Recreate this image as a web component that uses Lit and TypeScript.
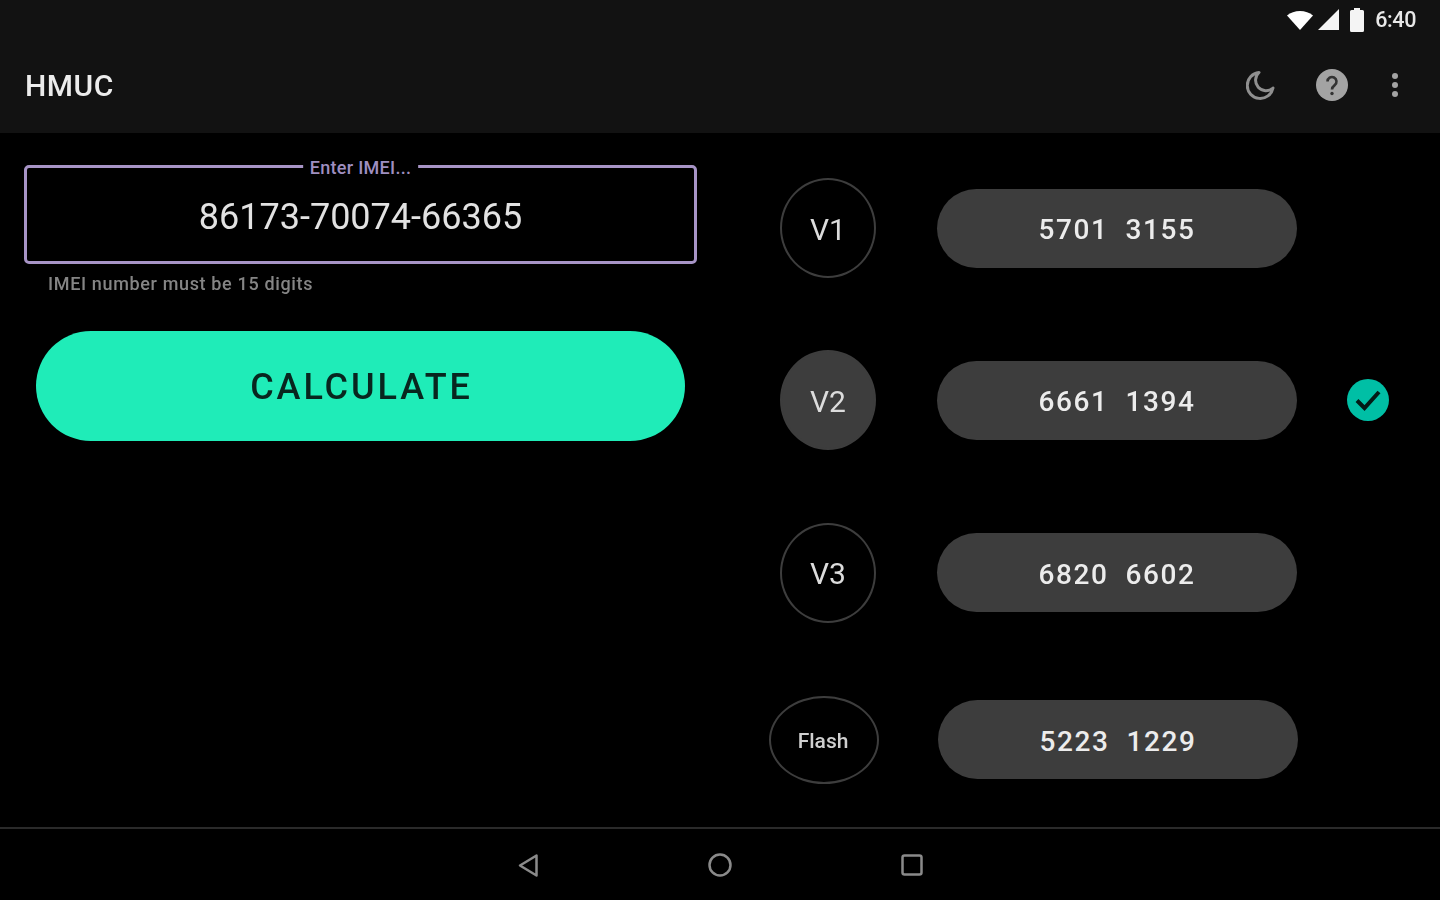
import { LitElement, html, css } from "lit";
import { customElement } from "lit/decorators.js";

const ROWS = [
  { label: "V1", code: "5701  3155" },
  { label: "V2", code: "6661  1394", active: true },
  { label: "V3", code: "6820  6602" },
  { label: "Flash", code: "5223  1229", flash: true },
];

@customElement("app-root")
export class AppRoot extends LitElement {
  static styles = css`
    :host { display: block; width: 1440px; height: 900px; background: #000; font-family: Roboto, "Liberation Sans", sans-serif; color: #e4e4e4; overflow: hidden; }
    .frame { display: flex; flex-direction: column; height: 900px; filter: blur(0.6px); }
    header { height: 133px; background: #121212; display: flex; flex-direction: column; flex: none; }
    .status { height: 40px; display: flex; align-items: center; justify-content: flex-end; padding-right: 24px; flex: none; }
    .status svg { display: block; }
    .wifi { margin-right: 5px; }
    .signal { margin-right: 10px; }
    .battery { margin-right: 11px; }
    .time { font-size: 21.5px; font-weight: 500; color: #e8e8e8; letter-spacing: -0.4px; line-height: 40px; }
    .toolbar { flex: 1; display: flex; align-items: center; padding: 0 41px 0 25px; }
    .title { font-size: 30px; font-weight: 500; color: #ececec; flex: 1; letter-spacing: 0.5px; position: relative; top: -1px; }
    .tools { display: flex; align-items: center; position: relative; top: -2px; }
    .tools svg { display: block; }
    .moon { margin-right: 40px; }
    .help { margin-right: 43px; }
    main { flex: 1; display: grid; grid-template-columns: 720px 720px; min-height: 0; }
    .left { padding: 32px 0 0 24px; display: flex; flex-direction: column; align-items: flex-start; }
    .field { position: relative; box-sizing: border-box; width: 673px; height: 99px; border: 3px solid #a794c6; border-radius: 5px; display: flex; align-items: center; justify-content: center; }
    .legend { position: absolute; top: -12px; left: 50%; transform: translateX(-50%); background: #000; padding: 0 7px; font-size: 18px; line-height: 24px; color: #9f8fc0; white-space: nowrap; font-weight: 500; letter-spacing: 0.3px; }
    .value { font-size: 36px; color: #e2e2e2; position: relative; top: 2px; }
    .hint { margin: 9px 0 0 24px; font-size: 18px; line-height: 22px; color: #858585; font-weight: 500; letter-spacing: 0.65px; }
    .calc { margin: 36px 0 0 12px; width: 649px; height: 110px; border-radius: 55px; background: #1fecb8; color: #08261f; font: 500 36px Roboto, sans-serif; letter-spacing: 2.9px; display: flex; align-items: center; justify-content: center; padding: 2px 0 0 2px; box-sizing: border-box; }
    .right { padding: 45px 0 0 49px; display: flex; flex-direction: column; gap: 72.3px; }
    .row { display: grid; grid-template-columns: 168px 360px 50px 42px; align-items: center; }
    .row.last { margin-top: 1px; }
    .badge { box-sizing: border-box; width: 96px; height: 100px; margin-left: 11px; border-radius: 50%; border: 2px solid #3d3d3d; display: flex; align-items: center; justify-content: center; font-size: 30px; color: #dcdcdc; padding-top: 2px; }
    .badge.on { background: #3d3d3d; border-color: #3d3d3d; }
    .badge.flash { width: 110px; height: 88px; margin-left: 0; font-size: 21px; font-weight: 500; color: #cfcfcf; padding: 2px 2px 0 0; }
    .pill { box-sizing: border-box; height: 79px; padding-top: 3px; border-radius: 40px; background: #3d3d3d; display: flex; align-items: center; justify-content: center; font-size: 28px; font-weight: 500; letter-spacing: 1.6px; color: #ececec; white-space: pre; }
    .last .pill { transform: translateX(1px); padding-top: 4px; }
    .check { grid-column: 4; display: block; }
    footer { height: 73px; flex: none; border-top: 2px solid #2a2a2a; box-sizing: border-box; display: grid; grid-template-columns: 24px 24px 24px; justify-content: center; column-gap: 168px; align-items: center; }
    footer svg { display: block; }
  `;

  private renderRow(r: (typeof ROWS)[number]) {
    const cls = `badge${r.active ? " on" : ""}${r.flash ? " flash" : ""}`;
    return html`<div class="row ${r.flash ? "last" : ""}">
      <div class=${cls}>${r.label}</div>
      <div class="pill">${r.code}</div>
      ${r.active
        ? html`<svg class="check" width="42" height="42" viewBox="0 0 42 42">
            <circle cx="21" cy="21" r="21" fill="#00bfa5"></circle>
            <path d="M10 21.500l7.500 7.500 14.500-16" fill="none" stroke="#031a16" stroke-width="4"></path>
          </svg>`
        : ""}
    </div>`;
  }

  render() {
    return html`<div class="frame">
      <header>
        <div class="status">
          <svg class="wifi" width="26" height="20" viewBox="0 0 26 20"><path d="M0 5.500C3.500 2.500 8 1 13 1s9.500 1.500 13 4.500L13 20z" fill="#fff"></path></svg>
          <svg class="signal" width="22" height="22" viewBox="0 0 22 22"><path d="M0 21 21 0v21z" fill="#f4f4f4"></path></svg>
          <svg class="battery" width="14" height="24" viewBox="0 0 14 24"><path d="M4 0h6v2h2.500q1.500 0 1.500 1.500V22.500q0 1.500-1.500 1.500h-11Q0 24 0 22.500V3.500Q0 2 1.500 2H4z" fill="#f4f4f4"></path></svg>
          <span class="time">6:40</span>
        </div>
        <div class="toolbar">
          <span class="title">HMUC</span>
          <div class="tools">
            <svg class="moon" width="30" height="32" viewBox="0 0 30 32"><path d="M13 3.500A13 13 0 1 0 27 19 10 10 0 0 1 13 3.500z" fill="none" stroke="#8f8f8f" stroke-width="3" stroke-linejoin="round"></path></svg>
            <svg class="help" width="32" height="32" viewBox="0 0 32 32">
              <circle cx="16" cy="16" r="16" fill="#a3a3a3"></circle>
              <path d="M11.500 12.500a4.500 4.500 0 1 1 7.200 3.600c-1.700 1.300-2.700 2.100-2.700 4.400" fill="none" stroke="#333" stroke-width="2.600"></path>
              <circle cx="16" cy="24.500" r="1.700" fill="#333"></circle>
            </svg>
            <svg width="8" height="26" viewBox="0 0 8 26"><circle cx="4" cy="4" r="3" fill="#a3a3a3"></circle><circle cx="4" cy="13" r="3" fill="#a3a3a3"></circle><circle cx="4" cy="22" r="3" fill="#a3a3a3"></circle></svg>
          </div>
        </div>
      </header>
      <main>
        <section class="left">
          <div class="field">
            <span class="legend">Enter IMEI...</span>
            <span class="value">86173-70074-66365</span>
          </div>
          <div class="hint">IMEI number must be 15 digits</div>
          <div class="calc">CALCULATE</div>
        </section>
        <section class="right">${ROWS.map((r) => this.renderRow(r))}</section>
      </main>
      <footer>
        <svg width="24" height="24" viewBox="0 0 24 24"><path d="M20.500 2.500v20L4 12.500z" fill="none" stroke="#8a8a8a" stroke-width="2.500" stroke-linejoin="round"></path></svg>
        <svg width="24" height="24" viewBox="0 0 24 24"><circle cx="12" cy="12" r="10.500" fill="none" stroke="#8a8a8a" stroke-width="2.500"></circle></svg>
        <svg width="24" height="24" viewBox="0 0 24 24"><rect x="2.500" y="2.500" width="19" height="19" rx="2" fill="none" stroke="#8a8a8a" stroke-width="2.500"></rect></svg>
      </footer>
    </div>`;
  }
}
